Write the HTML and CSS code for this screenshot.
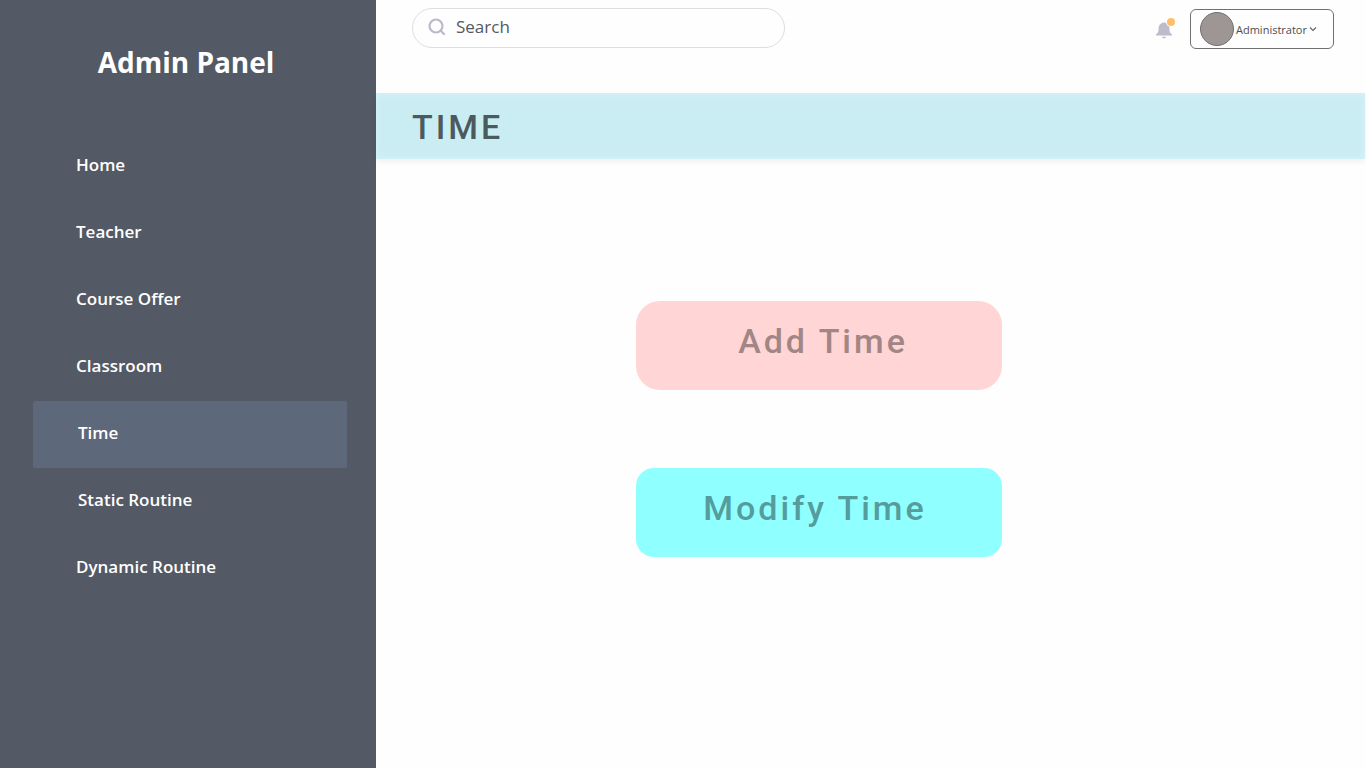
FILE: index.html
```html
<!DOCTYPE html>
<html lang="en">
<head>
<meta charset="utf-8">
<title>Admin Panel - Time</title>
<link rel="stylesheet" href="styles.css">
</head>
<body>
<div class="app">
  <aside class="sidebar">
    <h1 class="brand">Admin Panel</h1>
    <nav class="nav">
      <a class="nav-link" href="#home">Home</a>
      <a class="nav-link" href="#teacher">Teacher</a>
      <a class="nav-link" href="#course-offer">Course Offer</a>
      <a class="nav-link" href="#classroom">Classroom</a>
      <a class="nav-link nav-link-inset nav-link-active" href="#time" aria-current="page">Time</a>
      <a class="nav-link nav-link-inset" href="#static-routine">Static Routine</a>
      <a class="nav-link" href="#dynamic-routine">Dynamic Routine</a>
    </nav>
  </aside>
  <main class="main">
    <header class="topbar">
      <label class="search">
        <svg class="search-icon" width="18" height="18" viewBox="0 0 18 18" fill="none" stroke="#b9b9c9" stroke-width="2.2" stroke-linecap="round" aria-hidden="true"><circle cx="8" cy="8" r="6.500"/><path d="M13 13l3 3"/></svg>
        <input class="search-input" type="search" placeholder="Search" aria-label="Search">
      </label>
      <div class="account">
        <button class="bell" type="button" aria-label="Notifications">
          <svg width="20" height="22" viewBox="0 0 20 22" aria-hidden="true"><path d="M0 17.500v-1.200c1.800-1.100 2.500-2.100 2.500-4.300v-1.500C2.500 7.500 4.500 5 7.500 4.500h1C11.500 5 13.500 7.500 13.500 10.500V12c0 2.200.7 3.200 2.500 4.300v1.200z" fill="#bcbccb"/><path d="M6 18.800h4c-.3 1-1 1.500-2 1.500s-1.700-.5-2-1.500z" fill="#bcbccb"/><circle cx="15" cy="4" r="5" fill="#fefefe"/><circle cx="15" cy="4" r="4" fill="#fdbf6a"/></svg>
        </button>
        <button class="profile" type="button">
          <span class="avatar"></span>
          <span>Administrator</span>
          <svg class="chevron" width="8" height="6" viewBox="0 0 8 6" fill="none" stroke="#666" stroke-width="1.2" aria-hidden="true"><path d="M1 1.500l3 3 3-3"/></svg>
        </button>
      </div>
    </header>
    <h2 class="page-title">TIME</h2>
    <div class="actions">
      <button class="action action-add" type="button">Add Time</button>
      <button class="action action-modify" type="button">Modify Time</button>
    </div>
  </main>
</div>
</body>
</html>
```
FILE: styles.css
```css
* { box-sizing: border-box; }
body {
  margin: 0;
  background: #fefefe;
  font-family: "Segoe UI", "Open Sans", "Noto Sans", sans-serif;
}
button { font: inherit; border: 0; margin: 0; cursor: pointer; }
.app { display: flex; min-height: 100vh; }
.sidebar {
  flex: 0 0 376px;
  padding: 40px 29px 40px 33px;
  background: #535965;
  color: #fff;
}
.brand {
  margin: 0 0 49px;
  padding-right: 8px;
  font-size: 28px;
  line-height: 44px;
  font-weight: 700;
  text-align: center;
}
.nav { display: flex; flex-direction: column; }
.nav-link {
  padding: 20px 43px 23px;
  border-radius: 2px;
  color: #fff;
  font-size: 17px;
  line-height: 24px;
  font-weight: 600;
  text-decoration: none;
}
.nav-link-inset { padding-left: 45px; }
.nav-link-active { background: #5d687a; }
.main { flex: 1; min-width: 0; }
.topbar {
  display: flex;
  justify-content: space-between;
  align-items: flex-start;
  padding: 8px 32px 44px 36px;
}
.search {
  display: flex;
  align-items: center;
  gap: 10px;
  width: 373px;
  height: 40px;
  padding: 0 15px 2px;
  border: 1px solid #dedee0;
  border-radius: 20px;
}
.search-icon { flex: none; }
.search-input {
  flex: 1;
  min-width: 0;
  padding: 0;
  border: 0;
  outline: 0;
  background: transparent;
  color: #555861;
  font: 400 17px/24px "Segoe UI", "Open Sans", "Noto Sans", sans-serif;
}
.search-input::placeholder { color: #555861; opacity: 1; }
.account { display: flex; align-items: center; gap: 14px; padding-top: 1px; }
.bell { display: flex; padding: 0; background: transparent; }
.profile {
  display: flex;
  align-items: center;
  gap: 2px;
  width: 144px;
  height: 40px;
  padding: 0 9px;
  border: 1px solid #707070;
  border-radius: 6px;
  background: #fefefe;
  color: #4d4d4d;
  font-size: 11px;
}
.avatar {
  flex: none;
  width: 34px;
  height: 34px;
  border: 1px solid #707070;
  border-radius: 50%;
  background: #9e9694;
}
.chevron { flex: none; }
.page-title {
  margin: 0 1px 0 0;
  padding: 14px 36px 12px;
  background: #caedf3;
  box-shadow: 0 3px 6px rgba(0, 0, 0, 0.06), inset 0 0 6px #d6f6fa;
  color: #4c5a5f;
  font-family: Roboto, sans-serif;
  font-size: 34px;
  line-height: 40px;
  font-weight: 500;
  letter-spacing: 3px;
}
.actions {
  display: flex;
  flex-direction: column;
  align-items: center;
  gap: 78px;
  padding: 142px 104px 60px 0;
}
.action {
  width: 366px;
  max-width: 100%;
  padding: 20px 0 29px;
  font-family: Roboto, sans-serif;
  font-size: 34px;
  line-height: 40px;
  font-weight: 500;
  letter-spacing: 3px;
}
.action-add { padding-left: 8px; border-radius: 24px; background: #ffd5d5; color: #a28585; }
.action-modify { padding-right: 8px; border-radius: 18px; background: #8fffff; color: #559c9c; }
```
